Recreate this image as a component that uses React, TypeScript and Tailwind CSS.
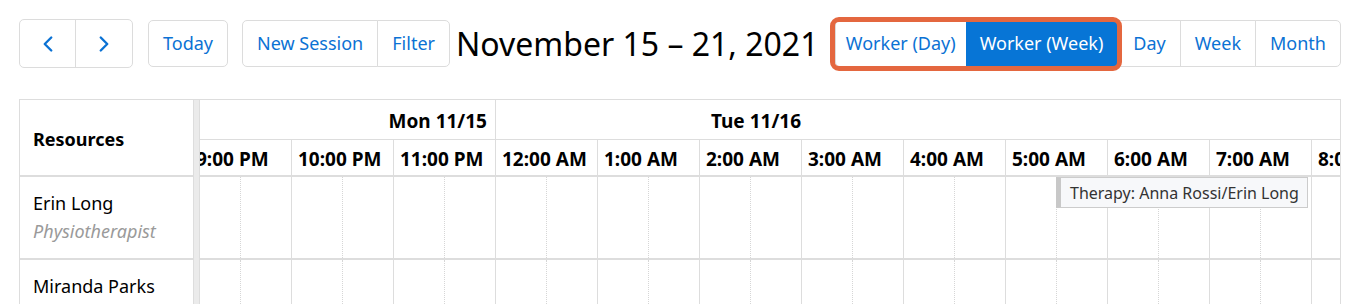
import * as React from 'react';
import { ChevronLeft, ChevronRight } from 'lucide-react';

// --------------------------------
// Data
// --------------------------------
const HOURS = [
  '9:00 PM',
  '10:00 PM',
  '11:00 PM',
  '12:00 AM',
  '1:00 AM',
  '2:00 AM',
  '3:00 AM',
  '4:00 AM',
  '5:00 AM',
  '6:00 AM',
  '7:00 AM',
  '8:00 AM',
];

const RESOURCES = [
  { name: 'Erin Long', title: 'Physiotherapist' },
  { name: 'Miranda Parks', title: 'Physiotherapist' },
];

const btnBase = 'h-[47px] text-[18px] border flex items-center whitespace-nowrap';
const btn = `${btnBase} px-[14px] text-[#0b72d4] bg-white border-[#dcdcdc]`;

// --------------------------------
// Toolbar
// --------------------------------
function Toolbar() {
  return (
    <div className="flex items-center h-[49px]">
      <div className="flex h-[49px] border border-[#dcdcdc] rounded-[5px] overflow-hidden">
        <button className="w-[56px] flex items-center justify-center text-[#0b72d4] border-r border-[#dcdcdc]">
          <ChevronLeft size={26} strokeWidth={2.2} />
        </button>
        <button className="w-[56px] flex items-center justify-center text-[#0b72d4]">
          <ChevronRight size={26} strokeWidth={2.2} />
        </button>
      </div>
      <button className={`${btn} ml-[15px] rounded-[5px]`}>Today</button>
      <div className="flex ml-[14px]">
        <button className={`${btn} rounded-l-[5px]`}>New Session</button>
        <button className={`${btn} -ml-px rounded-r-[5px]`}>Filter</button>
      </div>
      <h2 className="ml-[6px] text-[32px] text-black leading-none whitespace-nowrap">
        November 15 – 21, 2021
      </h2>
      <div className="ml-auto flex">
        <div className="relative flex">
          <button className={`${btnBase} px-[10px] text-[#0b72d4] bg-white border-[#dcdcdc] rounded-l-[5px]`}>
            Worker (Day)
          </button>
          <button className={`${btnBase} px-[13px] -ml-px bg-[#0775d6] border-[#0775d6] text-white`}>
            Worker (Week)
          </button>
          <span className="absolute -left-[5px] -top-[3px] -right-[5px] -bottom-[4px] border-[5px] border-[#e4673f] rounded-[9px] pointer-events-none" />
        </div>
        <button className={`${btn} ml-[1px]`}>Day</button>
        <button className={`${btn} -ml-px`}>Week</button>
        <button className={`${btn} -ml-px rounded-r-[5px]`}>Month</button>
      </div>
    </div>
  );
}

// --------------------------------
// Timeline
// --------------------------------
function HourCells() {
  return (
    <div className="flex h-full">
      {HOURS.map((h) => (
        <div key={h} className="w-[102px] shrink-0 h-full border-l border-[#dddddd] flex">
          <div className="w-1/2 h-full border-r border-dotted border-[#d6d6d6]" />
        </div>
      ))}
    </div>
  );
}

function Timeline() {
  return (
    <div className="flex-1 overflow-hidden">
      <div className="-ml-[11px] w-max">
        {/* day header */}
        <div className="flex h-[40px] border-b border-[#dddddd] font-bold text-[19px] text-black">
          <div className="w-[306px] shrink-0 flex items-center justify-end pr-[8px] pt-[3px]">Mon 11/15</div>
          <div className="flex-1 border-l border-[#dddddd] flex items-center pl-[215px] pt-[3px]">Tue 11/16</div>
        </div>
        {/* hour header */}
        <div className="flex h-[37px] border-b-2 border-[#dddddd] font-bold text-[19px] text-black">
          {HOURS.map((h) => (
            <div
              key={h}
              className="w-[102px] shrink-0 border-l border-[#dddddd] flex items-center pl-[6px] pt-[4px] whitespace-nowrap overflow-hidden"
            >
              {h}
            </div>
          ))}
        </div>
        {/* rows */}
        <div className="relative h-[83px] border-b-2 border-[#dddddd]">
          <HourCells />
          <div className="absolute left-[867px] top-0 w-[252px] h-[31px] bg-[#f7f8fa] border border-[#cccccc] border-l-[5px] border-l-[#c8c8c8] flex items-center pl-[9px] text-[16px] text-[#333333] whitespace-nowrap">
            Therapy: Anna Rossi/Erin Long
          </div>
        </div>
        <div className="h-[84px]">
          <HourCells />
        </div>
      </div>
    </div>
  );
}

// --------------------------------
// App
// --------------------------------
export default function App() {
  return (
    <div
      className="w-[1360px] h-[304px] overflow-hidden bg-white p-[19px]"
      style={{ fontFamily: '"Noto Sans", "Open Sans", sans-serif' }}
    >
      <Toolbar />
      <div className="mt-[31px] flex border border-[#dddddd] border-b-0">
        <div className="w-[173px] shrink-0 text-[18px] text-black">
          <div className="h-[77px] border-b-2 border-[#dddddd] flex items-center px-[13px] pt-[4px] font-bold">
            Resources
          </div>
          {RESOURCES.map((r, i) => (
            <div
              key={r.name}
              className={`h-[83px] px-[13px] pt-[12px] leading-[28px] ${i === 0 ? 'border-b-2 border-[#dddddd]' : ''}`}
            >
              <div>{r.name}</div>
              <div className="italic text-[#9a9a9a]">{r.title}</div>
            </div>
          ))}
        </div>
        <div className="w-[7px] shrink-0 bg-[#ebebeb] border-x border-[#dddddd]" />
        <Timeline />
      </div>
    </div>
  );
}
